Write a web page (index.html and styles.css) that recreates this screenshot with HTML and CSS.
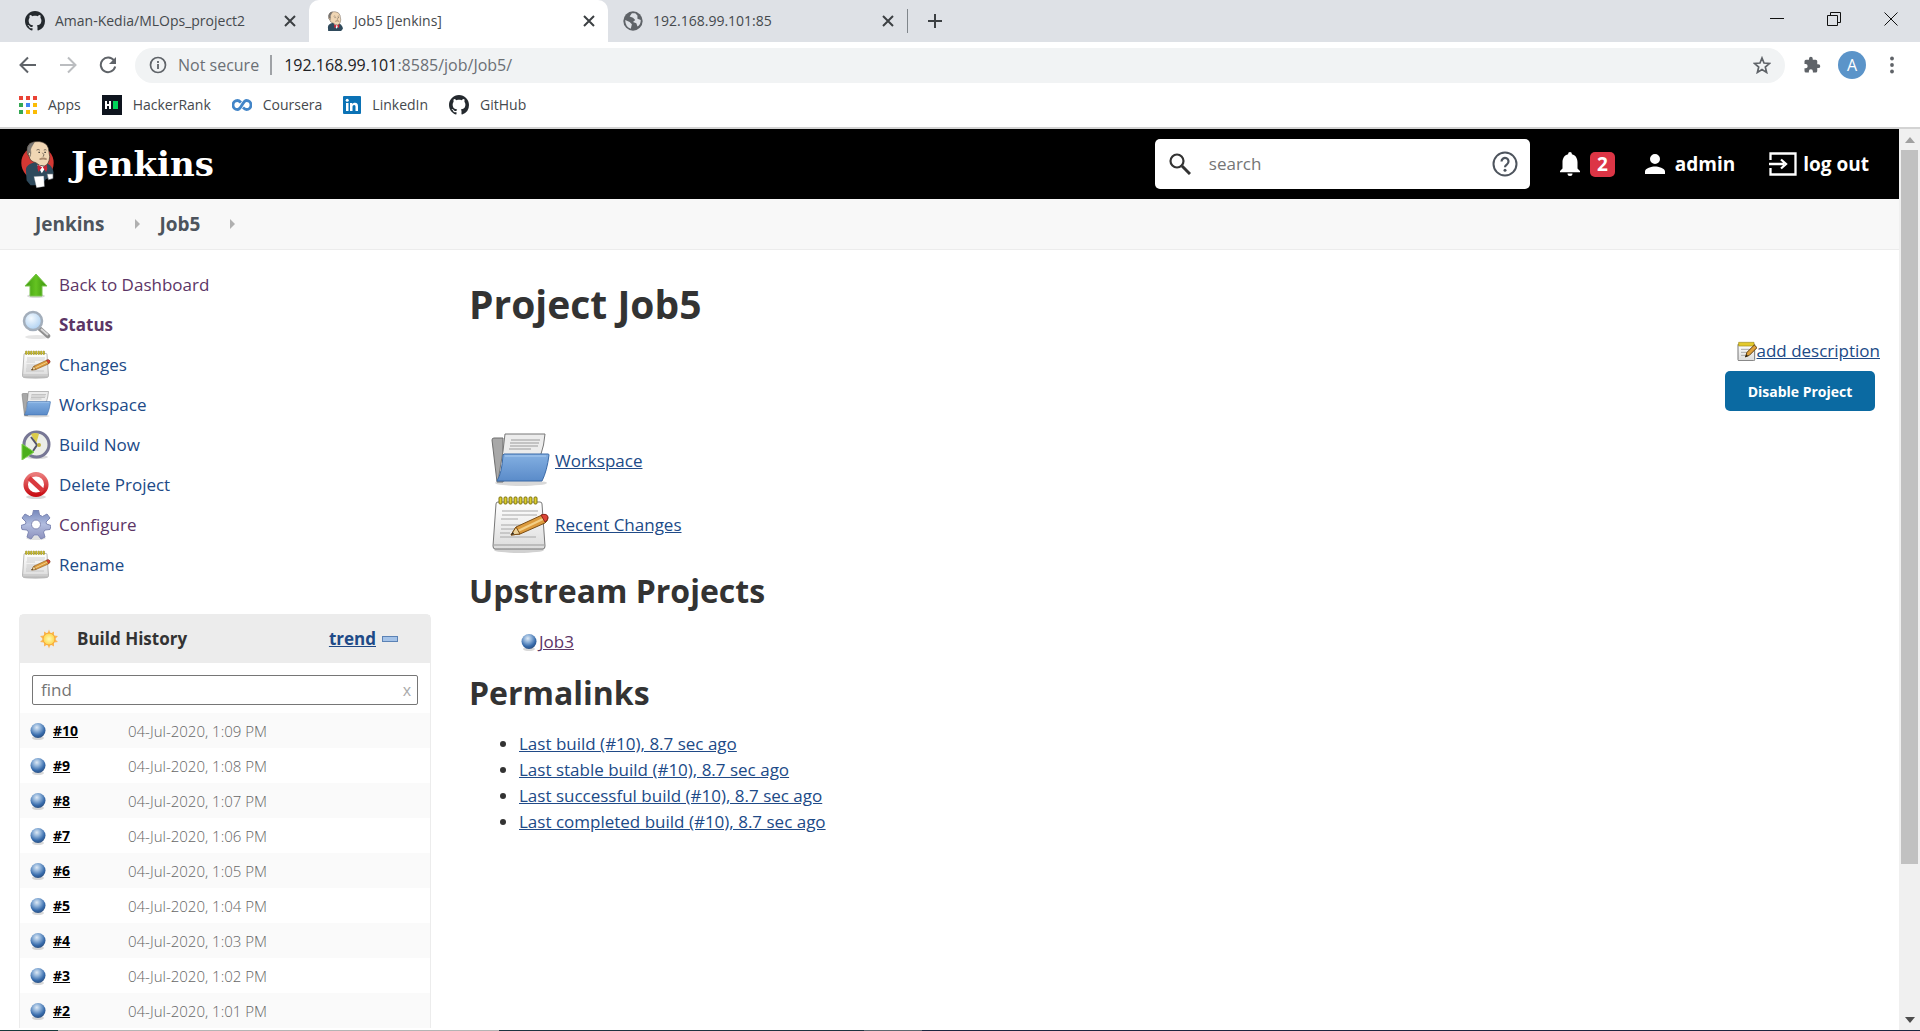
FILE: index.html
```html
<!DOCTYPE html>
<html lang="en">
<head>
<meta charset="utf-8">
<title>Job5 [Jenkins]</title>
<link rel="stylesheet" href="styles.css">
</head>
<body>
<svg class="defs" width="0" height="0" aria-hidden="true">
  <defs>
    <radialGradient id="ballFill" cx=".42" cy=".3" r=".7"><stop offset="0" stop-color="#dde9f5"/><stop offset=".35" stop-color="#8fb2d9"/><stop offset=".75" stop-color="#376bab"/><stop offset="1" stop-color="#2c5285"/></radialGradient>
    <linearGradient id="folderFill" x1="0" y1="0" x2="0" y2="1"><stop offset="0" stop-color="#84b0e2"/><stop offset="1" stop-color="#5a8bc9"/></linearGradient>
    <linearGradient id="paperFill" x1="0" y1="0" x2="0" y2="1"><stop offset="0" stop-color="#ffffff"/><stop offset="1" stop-color="#dcdcdc"/></linearGradient>
    <linearGradient id="arrowFill" x1="0" y1="0" x2="1" y2="0"><stop offset="0" stop-color="#3f9a10"/><stop offset=".5" stop-color="#64c321"/><stop offset="1" stop-color="#3a910d"/></linearGradient>
    <linearGradient id="stopFill" x1="0" y1="0" x2="0" y2="1"><stop offset="0" stop-color="#ea7a7a"/><stop offset="1" stop-color="#c90f16"/></linearGradient>
    <linearGradient id="gearFill" x1="0" y1="0" x2="0" y2="1"><stop offset="0" stop-color="#7487bb"/><stop offset=".5" stop-color="#b2bddf"/><stop offset="1" stop-color="#8d91bd"/></linearGradient>
    <radialGradient id="lensFill" cx=".4" cy=".35" r=".7"><stop offset="0" stop-color="#f4faff"/><stop offset="1" stop-color="#a9cdf0"/></radialGradient>
    <radialGradient id="sunFill"><stop offset="0" stop-color="#fffbb4"/><stop offset="1" stop-color="#fdd54a"/></radialGradient>
    <symbol id="ball" viewBox="0 0 16 18"><ellipse cx="8" cy="16" rx="6" ry="2" fill="#000" opacity=".15"/><circle cx="8" cy="8.5" r="7.5" fill="url(#ballFill)"/></symbol>
    <symbol id="folder" viewBox="0 0 60 60">
      <ellipse cx="31" cy="52" rx="26" ry="3" fill="#000" opacity=".15"/>
      <path d="M2 9q0-2 2-2h9v44H7z" fill="#a8a8a8" stroke="#6f6f6f"/>
      <path d="M15 3h40q-1 12-4 20L14 50H8l5-30z" fill="#ececec" stroke="#777"/>
      <path d="M21 9h29M20 12h29M20 15h28M19 18h22" stroke="#9a9a9a"/>
      <path d="M14 23h44q1 0 1 1-2 16-7 26H7q5-8 6-26z" fill="url(#folderFill)" stroke="#3b6ba8" stroke-linejoin="round"/>
      <path d="M15 25h41" stroke="#a9cbf0"/>
    </symbol>
    <symbol id="notepad" viewBox="0 0 60 60">
      <ellipse cx="29" cy="55" rx="25" ry="3" fill="#000" opacity=".18"/>
      <path d="M8 7h42q2 0 2 2l3 42q0 3-2 3H5q-2 0-2-3L6 9q0-2 2-2z" fill="url(#paperFill)" stroke="#777"/>
      <path d="M4 50h50" stroke="#999"/>
      <path d="M12 16h36M12 20h35M11 24h17M11 30h20M11 34h17M10 38h10M10 42h36" stroke="#a8a8a8"/>
      <g fill="#e0cf2b" stroke="#7d7410"><rect x="9" y="2" width="3" height="7" rx="1"/><rect x="14" y="2" width="3" height="7" rx="1"/><rect x="19" y="2" width="3" height="7" rx="1"/><rect x="24" y="2" width="3" height="7" rx="1"/><rect x="29" y="2" width="3" height="7" rx="1"/><rect x="34" y="2" width="3" height="7" rx="1"/><rect x="39" y="2" width="3" height="7" rx="1"/><rect x="44" y="2" width="3" height="7" rx="1"/></g>
      <path d="M21 40l5-8 26-12q5-1 6 3 0 3-3 5L30 39z" fill="#dc9a3c" stroke="#7b4d14"/>
      <path d="M28 36l25-12" stroke="#f3cf86" stroke-width="2"/>
      <path d="M21 40l5-8 4 7z" fill="#ecd29a" stroke="#7b4d14"/>
      <path d="M51 20q6-2 7 2 0 3-3 5z" fill="#dc4437" stroke="#8c241c"/>
      <path d="M21 40l2-3 1 2z" fill="#222"/>
    </symbol>
    <symbol id="octocat" viewBox="0 0 16 16"><path fill="#24292e" fill-rule="evenodd" d="M8 0C3.58 0 0 3.58 0 8c0 3.54 2.29 6.53 5.47 7.59.4.07.55-.17.55-.38 0-.19-.01-.82-.01-1.49-2.01.37-2.53-.49-2.69-.94-.09-.23-.48-.94-.82-1.13-.28-.15-.68-.52-.01-.53.63-.01 1.08.58 1.23.82.72 1.21 1.87.87 2.33.66.07-.52.28-.87.51-1.07-1.78-.2-3.64-.89-3.64-3.95 0-.87.31-1.59.82-2.15-.08-.2-.36-1.02.08-2.12 0 0 .67-.21 2.2.82.64-.18 1.32-.27 2-.27s1.36.09 2 .27c1.53-1.04 2.2-.82 2.2-.82.44 1.1.16 1.92.08 2.12.51.56.82 1.27.82 2.15 0 3.07-1.87 3.75-3.65 3.95.29.25.54.73.54 1.48 0 1.07-.01 1.93-.01 2.2 0 .21.15.46.55.38A8.01 8.01 0 0016 8c0-4.42-3.58-8-8-8z"/></symbol>
    <symbol id="butler" viewBox="58 55 106 150">
      <path d="M76 150q-2-12 12-20l16-6 30 2q18 4 24 22l2 10-10 12-14 6-12 18H90l-12-14z" fill="#2f4a5c"/>
      <path d="M80 98q-4-18 8-30 12-8 28-6 22 2 28 20l4 26q-2 24-16 28-14 2-26-10-18-4-20-18z" fill="#f0d6b4" stroke="#3c342e" stroke-width="2"/>
      <path d="M82 98q-6-18 6-30l14-5-7 12q-8 10-4 22l-2 10z" fill="#7c7976" stroke="#333" stroke-width="1"/>
      <path d="M86 106q-5-2-3-9 4-5 7 1" fill="#f0d6b4" stroke="#3c342e" stroke-width="2"/>
      <path d="M108 88q5-4 10 0M130 88q5-3 8 0M126 96q8 6 2 12" fill="none" stroke="#3c342e" stroke-width="2"/>
      <path d="M114 95h4M132 95h4" stroke="#222" stroke-width="4"/>
      <path d="M116 114q12-8 24 0l-2 4q-10-4-20 0z" fill="#a8886c"/>
      <path d="M110 132l14 26 12-18z" fill="#fff"/>
      <path d="M112 132l13 8-11 14q-6-12-2-22zM127 140l12-8q4 12-2 22z" fill="#cc2434"/>
    </symbol>
  </defs>
</svg>

<div class="browser">
  <div class="tabstrip">
    <div class="tabs">
      <div class="tab">
        <svg class="favicon" viewBox="0 0 16 16"><use href="#octocat"/></svg>
        <span class="tab-title">Aman-Kedia/MLOps_project2</span>
        <button class="tab-close" aria-label="Close tab"><svg viewBox="0 0 12 12"><path d="M1 1l10 10M11 1L1 11"/></svg></button>
      </div>
      <div class="tab tab-active">
        <svg class="favicon" viewBox="68 58 84 112"><use href="#butler" x="58" y="55" width="106" height="150"/></svg>
        <span class="tab-title">Job5 [Jenkins]</span>
        <button class="tab-close" aria-label="Close tab"><svg viewBox="0 0 12 12"><path d="M1 1l10 10M11 1L1 11"/></svg></button>
      </div>
      <div class="tab">
        <svg class="favicon" viewBox="0 0 18 18"><circle cx="9" cy="9" r="8.7" fill="#5f6368"/><path d="M2 8l4 2 2 2-1 4q-5-2-5-8zM8 2l-2 3 3 1 2 2-2 2 3 1 1 3q3-2 3-6l-3-1V4l-2-2z" fill="#dee1e6"/></svg>
        <span class="tab-title">192.168.99.101:85</span>
        <button class="tab-close" aria-label="Close tab"><svg viewBox="0 0 12 12"><path d="M1 1l10 10M11 1L1 11"/></svg></button>
      </div>
      <button class="new-tab" aria-label="New tab"><svg viewBox="0 0 16 16"><path d="M8 1v14M1 8h14"/></svg></button>
    </div>
    <div class="window-buttons">
      <button aria-label="Minimise"><svg viewBox="0 0 14 14"><path d="M0 6.500h14"/></svg></button>
      <button aria-label="Restore"><svg viewBox="0 0 14 14"><path d="M.5 3.500h10v10H.5zM3.500 3V.5h10v10H11"/></svg></button>
      <button aria-label="Close"><svg viewBox="0 0 14 14"><path d="M.5.5l13 13M13.500.5l-13 13"/></svg></button>
    </div>
  </div>

  <div class="toolbar">
    <div class="nav-buttons">
      <button aria-label="Back"><svg viewBox="0 0 18 18"><path d="M17 9H2M9 1.500L1.500 9 9 16.500"/></svg></button>
      <button class="is-off" aria-label="Forward"><svg viewBox="0 0 18 18"><path d="M1 9h15M9 1.500L16.500 9 9 16.500"/></svg></button>
      <button aria-label="Reload"><svg viewBox="0 0 18 18"><path d="M15 4.500A7.300 7.300 0 1 0 16.200 10.500"/><path d="M17 1v7h-7z" fill="#5f6368" stroke="none"/></svg></button>
    </div>
    <div class="omnibox">
      <svg class="info" viewBox="0 0 18 18"><circle cx="9" cy="9" r="7.500" fill="none" stroke="#5f6368" stroke-width="1.700"/><path d="M9 8v5M9 5v2" stroke="#5f6368" stroke-width="1.800"/></svg>
      <span class="security">Not secure</span>
      <span class="url" role="textbox" aria-label="Address"><span class="url-host">192.168.99.101</span>:8585/job/Job5/</span>
      <button class="star" aria-label="Bookmark this tab"><svg viewBox="0 0 18 18"><path d="M9 2l2 5 5.500.4-4.200 3.600 1.300 5.400L9 13.500l-4.600 2.900L5.700 11 1.500 7.400 7 7z" fill="none" stroke="#5f6368" stroke-width="1.700"/></svg></button>
    </div>
    <div class="toolbar-end">
      <button aria-label="Extensions"><svg viewBox="0 0 24 24"><path fill="#5f6368" d="M20.500 11H19V7a2 2 0 0 0-2-2h-4V3.500a2.500 2.500 0 0 0-5 0V5H4a2 2 0 0 0-2 2v3.800h1.500a2.700 2.700 0 0 1 0 5.400H2V20a2 2 0 0 0 2 2h3.800v-1.500a2.700 2.700 0 0 1 5.400 0V22H17a2 2 0 0 0 2-2v-4h1.500a2.500 2.500 0 0 0 0-5z"/></svg></button>
      <button class="avatar" aria-label="Profile">A</button>
      <button aria-label="Menu"><svg viewBox="0 0 18 18"><g fill="#5f6368"><circle cx="9" cy="2.500" r="1.900"/><circle cx="9" cy="9" r="1.900"/><circle cx="9" cy="15.500" r="1.900"/></g></svg></button>
    </div>
  </div>

  <nav class="bookmarks">
    <a href="#"><svg viewBox="0 0 18 18"><g fill="#ea4335"><path d="M0 0h4v4H0zM7 0h4v4H7zM14 0h4v4h-4z"/></g><path fill="#34a853" d="M0 7h4v4H0zM0 14h4v4H0z"/><path fill="#4285f4" d="M7 7h4v4H7z"/><path fill="#fbbc05" d="M14 7h4v4h-4zM7 14h4v4H7zM14 14h4v4h-4z"/></svg>Apps</a>
    <a href="#"><svg class="wide" viewBox="0 0 20 20"><path fill="#0e141e" d="M0 0h20v20H0z"/><path d="M4 6v8M8 6v8M4 10h4" stroke="#fff" stroke-width="2"/><path fill="#00d45a" d="M11 6h5v8h-5z"/></svg>HackerRank</a>
    <a href="#"><svg class="wide" viewBox="0 0 20 20"><path d="M9 7.500C7.500 6 6.500 5.500 5.500 5.500a4 4 0 0 0 0 9C9.500 14.500 10.500 5.500 14.500 5.500a4 4 0 0 1 0 9C13 14.500 12 13.500 11 12.500" fill="none" stroke="#4285c8" stroke-width="2.800"/></svg>Coursera</a>
    <a href="#"><svg viewBox="0 0 18 18"><rect width="18" height="18" rx="1" fill="#0b72b5"/><path d="M3 7h2.500v8H3zM7 7h2.300v1.200C10 7.200 11 6.800 12 6.800c2.200 0 3 1.400 3 3.600V15h-2.500v-4.200c0-1.200-.4-1.900-1.300-1.900-1.100 0-1.700.7-1.700 2V15H7z" fill="#fff"/><circle cx="4.200" cy="4.300" r="1.500" fill="#fff"/></svg>LinkedIn</a>
    <a href="#"><svg class="wide" viewBox="0 0 16 16"><use href="#octocat"/></svg>GitHub</a>
  </nav>
</div>

<div class="viewport">
  <div class="page">
    <header class="header">
      <a class="brand" href="#">
        <svg viewBox="58 55 106 150">
          <ellipse cx="111" cy="127" rx="49" ry="50" fill="#d33833"/>
          <use href="#butler" x="58" y="55" width="106" height="150"/>
          <path d="M100 168l30-2 2 32-24 4z" fill="#fff" stroke="#6a7278" stroke-width="1"/>
          <path d="M140 160l18 0v14l-14 4z" fill="#fff" stroke="#6a7278" stroke-width="2"/>
        </svg>
        <span>Jenkins</span>
      </a>
      <form class="search">
        <svg viewBox="0 0 22 22"><circle cx="8" cy="8" r="6.500" fill="none" stroke="#333" stroke-width="2.200"/><path d="M13 13l8 8" stroke="#333" stroke-width="3"/></svg>
        <input type="text" placeholder="search" aria-label="search">
        <a href="#" aria-label="Search help"><svg class="help" viewBox="0 0 26 26"><circle cx="13" cy="13" r="11.500" fill="none" stroke="#4d545d" stroke-width="2"/><path d="M9.500 10.500a3.500 3.500 0 1 1 5.500 2.800c-1.300.9-2 1.500-2 3" fill="none" stroke="#4d545d" stroke-width="2.200"/><circle cx="13" cy="19.300" r="1.500" fill="#4d545d"/></svg></a>
      </form>
      <div class="account">
        <a class="alerts" href="#" aria-label="2 alerts"><svg viewBox="0 0 20 24"><path fill="#fff" d="M10 24a2.500 2.500 0 0 0 2.500-2.500h-5A2.500 2.500 0 0 0 10 24zM17.500 16.500v-6.300c0-3.900-2-7-5.600-7.900V1.900a1.900 1.900 0 0 0-3.800 0v.4C4.500 3.200 2.500 6.300 2.500 10.200v6.300L0 19v1.200h20V19z"/></svg><span class="badge">2</span></a>
        <a class="user" href="#"><svg viewBox="0 0 20 20"><path fill="#fff" d="M10 10a5 5 0 1 0 0-10 5 5 0 0 0 0 10zM10 12.500c-3.300 0-10 1.700-10 5V20h20v-2.500c0-3.300-6.700-5-10-5z"/></svg>admin</a>
        <a class="logout" href="#"><svg viewBox="0 0 28 24"><path d="M1.500 8V1.500h25v21h-25V16" fill="none" stroke="#fff" stroke-width="2.300"/><path d="M0 12h15M12 7.500l5 4.500-5 4.500" fill="none" stroke="#fff" stroke-width="2.300"/></svg>log out</a>
      </div>
    </header>

    <ul class="breadcrumbs">
      <li><a href="#">Jenkins</a></li>
      <li><a href="#">Job5</a></li>
    </ul>

    <div class="columns">
      <aside class="side">
        <nav class="tasks">
          <a class="visited" href="#"><svg viewBox="0 0 30 30"><ellipse cx="15" cy="26" rx="9" ry="2" fill="#000" opacity=".15"/><path d="M15 4l11 12h-5v10H9V16H4z" fill="url(#arrowFill)" stroke="#79c44c"/></svg>Back to Dashboard</a>
          <a class="visited current" href="#"><svg viewBox="0 0 30 30"><ellipse cx="16" cy="27" rx="12" ry="2" fill="#000" opacity=".1"/><path d="M18 18l9 8" stroke="#8f8f8f" stroke-width="4.500" stroke-linecap="round"/><path d="M20 19l7 6" stroke="#d8d8d8" stroke-width="2"/><circle cx="12" cy="11" r="9" fill="url(#lensFill)" stroke="#a3aebb" stroke-width="2.500"/></svg>Status</a>
          <a href="#"><svg viewBox="0 0 60 60"><use href="#notepad"/></svg>Changes</a>
          <a href="#"><svg viewBox="0 0 60 60"><use href="#folder"/></svg>Workspace</a>
          <a href="#"><svg viewBox="0 0 30 30"><ellipse cx="16" cy="27" rx="11" ry="2" fill="#000" opacity=".15"/><circle cx="15.500" cy="14.500" r="12.500" fill="#eceee8" stroke="#777795" stroke-width="3"/><path d="M15 14L10 4q4-2 8 0z" fill="#dccc4a"/><path d="M10 7l6 8-4 6" fill="none" stroke="#55556a" stroke-width="2"/><circle cx="18" cy="15" r="2" fill="#c0b23c"/><path d="M1 14l12 8-12 8z" fill="#4caf1a" stroke="#7fd04f"/></svg>Build Now</a>
          <a href="#"><svg viewBox="0 0 30 30"><ellipse cx="15" cy="27" rx="10" ry="2" fill="#000" opacity=".15"/><circle cx="15" cy="14.500" r="10.300" fill="#fff" stroke="url(#stopFill)" stroke-width="4.500"/><path d="M8 8l14 13" stroke="#d93a3e" stroke-width="4.500"/></svg>Delete Project</a>
          <a class="visited" href="#"><svg viewBox="0 0 30 30"><ellipse cx="15" cy="28" rx="10" ry="2" fill="#000" opacity=".12"/><path d="M12.500 0h5l1 5 3 1.500L26 4l3 4-4 4 .5 2 4.500 1.500-1 4-5 .5-1.500 2 1.500 5-4 2-3-4h-4l-3 4-4-2 1.500-5-1.500-2-5-.5-1-4L4.500 14 5 12 1 8l3-4 4.500 2.500 3-1.500z" fill="url(#gearFill)" stroke="#7d86b3"/><circle cx="15" cy="14.500" r="4.500" fill="#fff" stroke="#8389b3"/></svg>Configure</a>
          <a href="#"><svg viewBox="0 0 60 60"><use href="#notepad"/></svg>Rename</a>
        </nav>

        <section class="history">
          <div class="history-head">
            <svg class="sun" viewBox="0 0 20 20"><path d="M10 .5l1.500 4 3.500-2v4l4 .5-3 3 3 3-4 .5v4l-3.500-2-1.500 4-1.500-4-3.500 2v-4L1 13l3-3-3-3 4-.5v-4l3.500 2z" fill="#fbb552"/><circle cx="10" cy="10" r="6" fill="url(#sunFill)" stroke="#f7a93a"/></svg>
            <h3>Build History</h3>
            <a href="#">trend</a>
            <button class="collapse" aria-label="Collapse"></button>
          </div>
          <div class="find">
            <input type="text" placeholder="find" aria-label="find">
            <button aria-label="Clear">x</button>
          </div>
          <table class="builds">
            <tr><td><svg viewBox="0 0 16 18"><use href="#ball"/></svg></td><td><a href="#">#10</a></td><td>04-Jul-2020, 1:09 PM</td></tr>
            <tr><td><svg viewBox="0 0 16 18"><use href="#ball"/></svg></td><td><a href="#">#9</a></td><td>04-Jul-2020, 1:08 PM</td></tr>
            <tr><td><svg viewBox="0 0 16 18"><use href="#ball"/></svg></td><td><a href="#">#8</a></td><td>04-Jul-2020, 1:07 PM</td></tr>
            <tr><td><svg viewBox="0 0 16 18"><use href="#ball"/></svg></td><td><a href="#">#7</a></td><td>04-Jul-2020, 1:06 PM</td></tr>
            <tr><td><svg viewBox="0 0 16 18"><use href="#ball"/></svg></td><td><a href="#">#6</a></td><td>04-Jul-2020, 1:05 PM</td></tr>
            <tr><td><svg viewBox="0 0 16 18"><use href="#ball"/></svg></td><td><a href="#">#5</a></td><td>04-Jul-2020, 1:04 PM</td></tr>
            <tr><td><svg viewBox="0 0 16 18"><use href="#ball"/></svg></td><td><a href="#">#4</a></td><td>04-Jul-2020, 1:03 PM</td></tr>
            <tr><td><svg viewBox="0 0 16 18"><use href="#ball"/></svg></td><td><a href="#">#3</a></td><td>04-Jul-2020, 1:02 PM</td></tr>
            <tr><td><svg viewBox="0 0 16 18"><use href="#ball"/></svg></td><td><a href="#">#2</a></td><td>04-Jul-2020, 1:01 PM</td></tr>
          </table>
        </section>
      </aside>

      <main class="main">
        <h1>Project Job5</h1>
        <div class="description">
          <a href="#"><svg viewBox="0 0 60 60"><path d="M3 10h50v46q0 3-3 3H6q-3 0-3-3z" fill="url(#paperFill)" stroke="#777" stroke-width="3"/><path d="M5 4h46v11H5z" fill="#e3c92c" stroke="#a08c18" stroke-width="2"/><path d="M12 25h26M12 34h18M12 43h12" stroke="#aaa" stroke-width="3"/><path d="M25 48l5-14 22-22 8 8-23 23z" fill="#e0a13c" stroke="#5e3f10" stroke-width="3"/><path d="M25 48l3-8 5 5z" fill="#222"/></svg><span>add description</span></a>
          <button class="primary">Disable Project</button>
        </div>
        <ul class="shortcuts">
          <li><svg viewBox="0 0 60 60"><use href="#folder"/></svg><a href="#">Workspace</a></li>
          <li><svg viewBox="0 0 60 60"><use href="#notepad"/></svg><a href="#">Recent Changes</a></li>
        </ul>
        <h2>Upstream Projects</h2>
        <ul class="upstream">
          <li><svg viewBox="0 0 16 18"><use href="#ball"/></svg><a class="visited" href="#">Job3</a></li>
        </ul>
        <h2>Permalinks</h2>
        <ul class="permalinks">
          <li><a href="#">Last build (#10), 8.7 sec ago</a></li>
          <li><a href="#">Last stable build (#10), 8.7 sec ago</a></li>
          <li><a href="#">Last successful build (#10), 8.7 sec ago</a></li>
          <li><a href="#">Last completed build (#10), 8.7 sec ago</a></li>
        </ul>
      </main>
    </div>
  </div>
  <div class="scrollbar" aria-hidden="true">
    <svg viewBox="0 0 10 6"><path d="M0 6l5-6 5 6z" fill="#a0a0a0"/></svg>
    <div class="track"><div class="thumb"></div></div>
    <svg viewBox="0 0 10 6"><path d="M0 0l5 6 5-6z" fill="#4d4d4d"/></svg>
  </div>
</div>
<div class="taskbar-edge"></div>
</body>
</html>
```
FILE: styles.css
```css
* {
  box-sizing: border-box;
}

body {
  margin: 0;
  height: 100vh;
  display: flex;
  flex-direction: column;
  overflow: hidden;
  background: #fff;
  color: #333;
  font-family: "Open Sans", "Noto Sans", sans-serif;
  font-size: 17px;
  line-height: 26px;
}

.defs {
  position: absolute;
}

svg {
  display: block;
  flex: none;
}

button {
  padding: 0;
  border: 0;
  background: none;
  font-family: inherit;
}

ul {
  margin: 0;
  padding: 0;
  list-style: none;
}

a {
  color: #204a87;
}

a.visited {
  color: #5c3566;
}

/* Browser window */
.tabstrip {
  display: flex;
  justify-content: space-between;
  height: 42px;
  background: #dee1e6;
}

.tabs {
  display: flex;
  padding-left: 10px;
}

.tab {
  display: flex;
  align-items: center;
  width: 299px;
  padding: 0 13px 0 15px;
  color: #45494d;
  font-size: 14px;
}

.tab-active {
  border-radius: 10px 10px 0 0;
  background: #fff;
}

.favicon {
  width: 20px;
  height: 20px;
}

.tab-title {
  flex: 1;
  margin-left: 10px;
  white-space: nowrap;
}

.tab-close svg {
  width: 12px;
  height: 12px;
  stroke: #3c4043;
  stroke-width: 2;
}

.new-tab {
  align-self: center;
  height: 24px;
  padding-left: 19px;
  border-left: 1px solid #80868b;
}

.new-tab svg {
  width: 16px;
  height: 16px;
  stroke: #3c4043;
  stroke-width: 2;
}

.window-buttons {
  display: flex;
  align-items: center;
  gap: 43px;
  padding: 0 22px 4px 0;
}

.window-buttons svg {
  width: 14px;
  height: 14px;
  fill: none;
  stroke: #111;
}

.toolbar {
  display: flex;
  align-items: center;
  height: 46px;
  padding: 0 19px;
}

.nav-buttons {
  display: flex;
  gap: 22px;
  margin-right: 18px;
}

.nav-buttons svg {
  width: 18px;
  height: 18px;
  fill: none;
  stroke: #5f6368;
  stroke-width: 2;
}

.nav-buttons .is-off svg {
  stroke: #bbbdc0;
}

.omnibox {
  flex: 1;
  display: flex;
  align-items: center;
  height: 35px;
  padding: 0 14px;
  border-radius: 18px;
  background: #f1f3f4;
  color: #6b6f74;
  font-size: 16px;
}

.info,
.star svg {
  width: 18px;
  height: 18px;
}

.security {
  margin-left: 11px;
  padding-right: 11px;
  border-right: 2px solid #9fa2a6;
  line-height: 20px;
}

.url {
  flex: 1;
  margin-left: 12px;
}

.url-host {
  color: #202124;
}

.toolbar-end {
  display: flex;
  align-items: center;
  gap: 17px;
  margin-left: 18px;
}

.toolbar-end svg {
  width: 18px;
  height: 18px;
}

.avatar {
  width: 28px;
  height: 28px;
  border-radius: 50%;
  background: #5b94c9;
  color: #fff;
  font-size: 16px;
}

.bookmarks {
  display: flex;
  align-items: center;
  gap: 21px;
  height: 41px;
  padding: 0 19px 6px;
  border-bottom: 2px solid #d3d3d3;
}

.bookmarks a {
  display: flex;
  align-items: center;
  gap: 11px;
  color: #45494d;
  font-size: 14px;
  text-decoration: none;
}

.bookmarks svg {
  width: 18px;
  height: 18px;
}

.bookmarks .wide {
  width: 20px;
  height: 20px;
}

.viewport {
  flex: 1;
  display: flex;
  min-height: 0;
}

.page {
  flex: 1;
  min-width: 0;
  overflow: hidden;
}

.scrollbar {
  display: flex;
  flex-direction: column;
  align-items: center;
  width: 21px;
  padding: 8px 0 7px;
  background: #f0f0f0;
}

.scrollbar svg {
  width: 10px;
  height: 6px;
}

.track {
  flex: 1;
  width: 17px;
  margin: 7px 0;
}

.thumb {
  height: 83%;
  background: #c1c1c1;
}

.taskbar-edge {
  height: 1px;
  background: linear-gradient(90deg, #173a3c 3%, #b4b4b4 3% 26%, #1d3440 26% 45%, #5c6870 45% 48%, #1b2740 48%);
}

/* Jenkins header */
.header {
  display: flex;
  align-items: center;
  height: 70px;
  padding: 0 30px 0 20px;
  background: #000;
}

.brand {
  display: flex;
  align-items: center;
  gap: 16px;
  color: #fff;
  font-family: "DejaVu Serif", serif;
  font-size: 34px;
  font-weight: bold;
  text-decoration: none;
}

.brand svg {
  width: 35px;
  height: 50px;
}

.search {
  display: flex;
  align-items: center;
  width: 375px;
  height: 50px;
  margin-left: auto;
  padding: 0 12px 0 14px;
  border-radius: 5px;
  background: #fff;
}

.search svg {
  width: 22px;
  height: 22px;
}

.search .help {
  width: 26px;
  height: 26px;
}

.search input {
  flex: 1;
  min-width: 0;
  padding: 0 18px;
  border: 0;
  font: inherit;
}

input::placeholder {
  color: #757575;
}

.account {
  display: flex;
  align-items: center;
  gap: 30px;
  margin-left: 30px;
}

.account a {
  display: flex;
  align-items: center;
  gap: 10px;
  color: #fff;
  font-size: 19px;
  font-weight: bold;
  text-decoration: none;
}

.account .logout {
  gap: 6px;
  margin-left: 4px;
}

.alerts svg {
  width: 20px;
  height: 24px;
}

.user svg {
  width: 20px;
  height: 20px;
}

.logout svg {
  width: 28px;
  height: 24px;
}

.badge {
  width: 25px;
  border-radius: 5px;
  background: #dc3545;
  line-height: 25px;
  text-align: center;
}

.breadcrumbs {
  display: flex;
  align-items: center;
  height: 51px;
  padding-left: 35px;
  border-bottom: 1px solid #ececec;
  background: #f8f8f8;
}

.breadcrumbs li {
  display: flex;
  align-items: center;
}

.breadcrumbs li::after {
  content: "";
  margin: 0 20px 0 30px;
  border: 5px solid transparent;
  border-right-width: 0;
  border-left-color: #b0b0b0;
}

.breadcrumbs a {
  color: #4d545d;
  font-size: 19px;
  font-weight: bold;
  text-decoration: none;
}

.columns {
  display: flex;
}

/* Side panel */
.side {
  width: 431px;
  padding: 15px 0 0 19px;
}

.tasks a {
  display: flex;
  align-items: center;
  gap: 8px;
  height: 40px;
  padding: 0 2px;
  text-decoration: none;
}

.tasks svg {
  width: 30px;
  height: 30px;
}

.tasks .current {
  font-weight: bold;
}

.history {
  margin-top: 29px;
  border: 1px solid #ececec;
  border-bottom: 0;
  border-radius: 5px 5px 0 0;
}

.history-head {
  display: flex;
  align-items: center;
  height: 48px;
  padding: 0 32px 0 19px;
  background: #ececec;
  font-weight: bold;
}

.sun {
  width: 20px;
  height: 20px;
}

h3 {
  flex: 1;
  margin: 0 0 0 18px;
  font-size: 17px;
}

.collapse {
  width: 16px;
  height: 6px;
  margin-left: 6px;
  border: 1px solid #5b82b5;
  background: #a5c3e8;
}

.find {
  display: flex;
  height: 30px;
  margin: 12px;
  margin-bottom: 8px;
  border: 1px solid #767676;
  border-radius: 2px;
}

.find input {
  flex: 1;
  min-width: 0;
  padding: 0 8px;
  border: 0;
  background: none;
  font: inherit;
}

.find button {
  padding: 0 6px;
  color: #aaa;
  font-size: 16px;
}

.builds {
  width: 100%;
  border-collapse: collapse;
  font-size: 15px;
}

.builds tr {
  height: 35px;
}

.builds tr:nth-child(odd) {
  background: #fafafa;
}

.builds td {
  padding: 0;
  color: #666;
  font-weight: 300;
}

.builds td:first-child {
  width: 33px;
  padding-left: 10px;
}

.builds td:nth-child(2) {
  width: 75px;
  font-size: 14px;
}

.builds a {
  color: #000;
  font-weight: bold;
}

.builds svg,
.upstream svg {
  width: 16px;
  height: 18px;
}

/* Job details */
.main {
  flex: 1;
  padding: 29px 19px 0 38px;
}

h1 {
  margin: 0;
  font-size: 39px;
  line-height: 50px;
}

h2 {
  margin: 16px 0;
  font-size: 32px;
  line-height: 44px;
}

.description {
  display: flex;
  flex-direction: column;
  align-items: flex-end;
  gap: 7px;
  margin: 9px 0 18px;
}

.description a {
  display: flex;
  align-items: center;
  text-decoration: none;
}

.description span {
  text-decoration: underline;
}

.description svg {
  width: 20px;
  height: 20px;
}

.primary {
  width: 150px;
  height: 40px;
  margin-right: 5px;
  border-radius: 5px;
  background: #0b6aa2;
  color: #fff;
  font-size: 14px;
  font-weight: bold;
}

.shortcuts {
  padding-left: 21px;
}

.shortcuts li {
  display: flex;
  align-items: center;
  gap: 5px;
  height: 64px;
}

.shortcuts svg {
  width: 60px;
  height: 60px;
}

.shortcuts + h2 {
  margin-top: 12px;
}

.upstream {
  padding-left: 52px;
}

.upstream li {
  display: flex;
  align-items: center;
  gap: 2px;
}

.permalinks {
  padding-left: 50px;
  list-style: disc;
}
```
